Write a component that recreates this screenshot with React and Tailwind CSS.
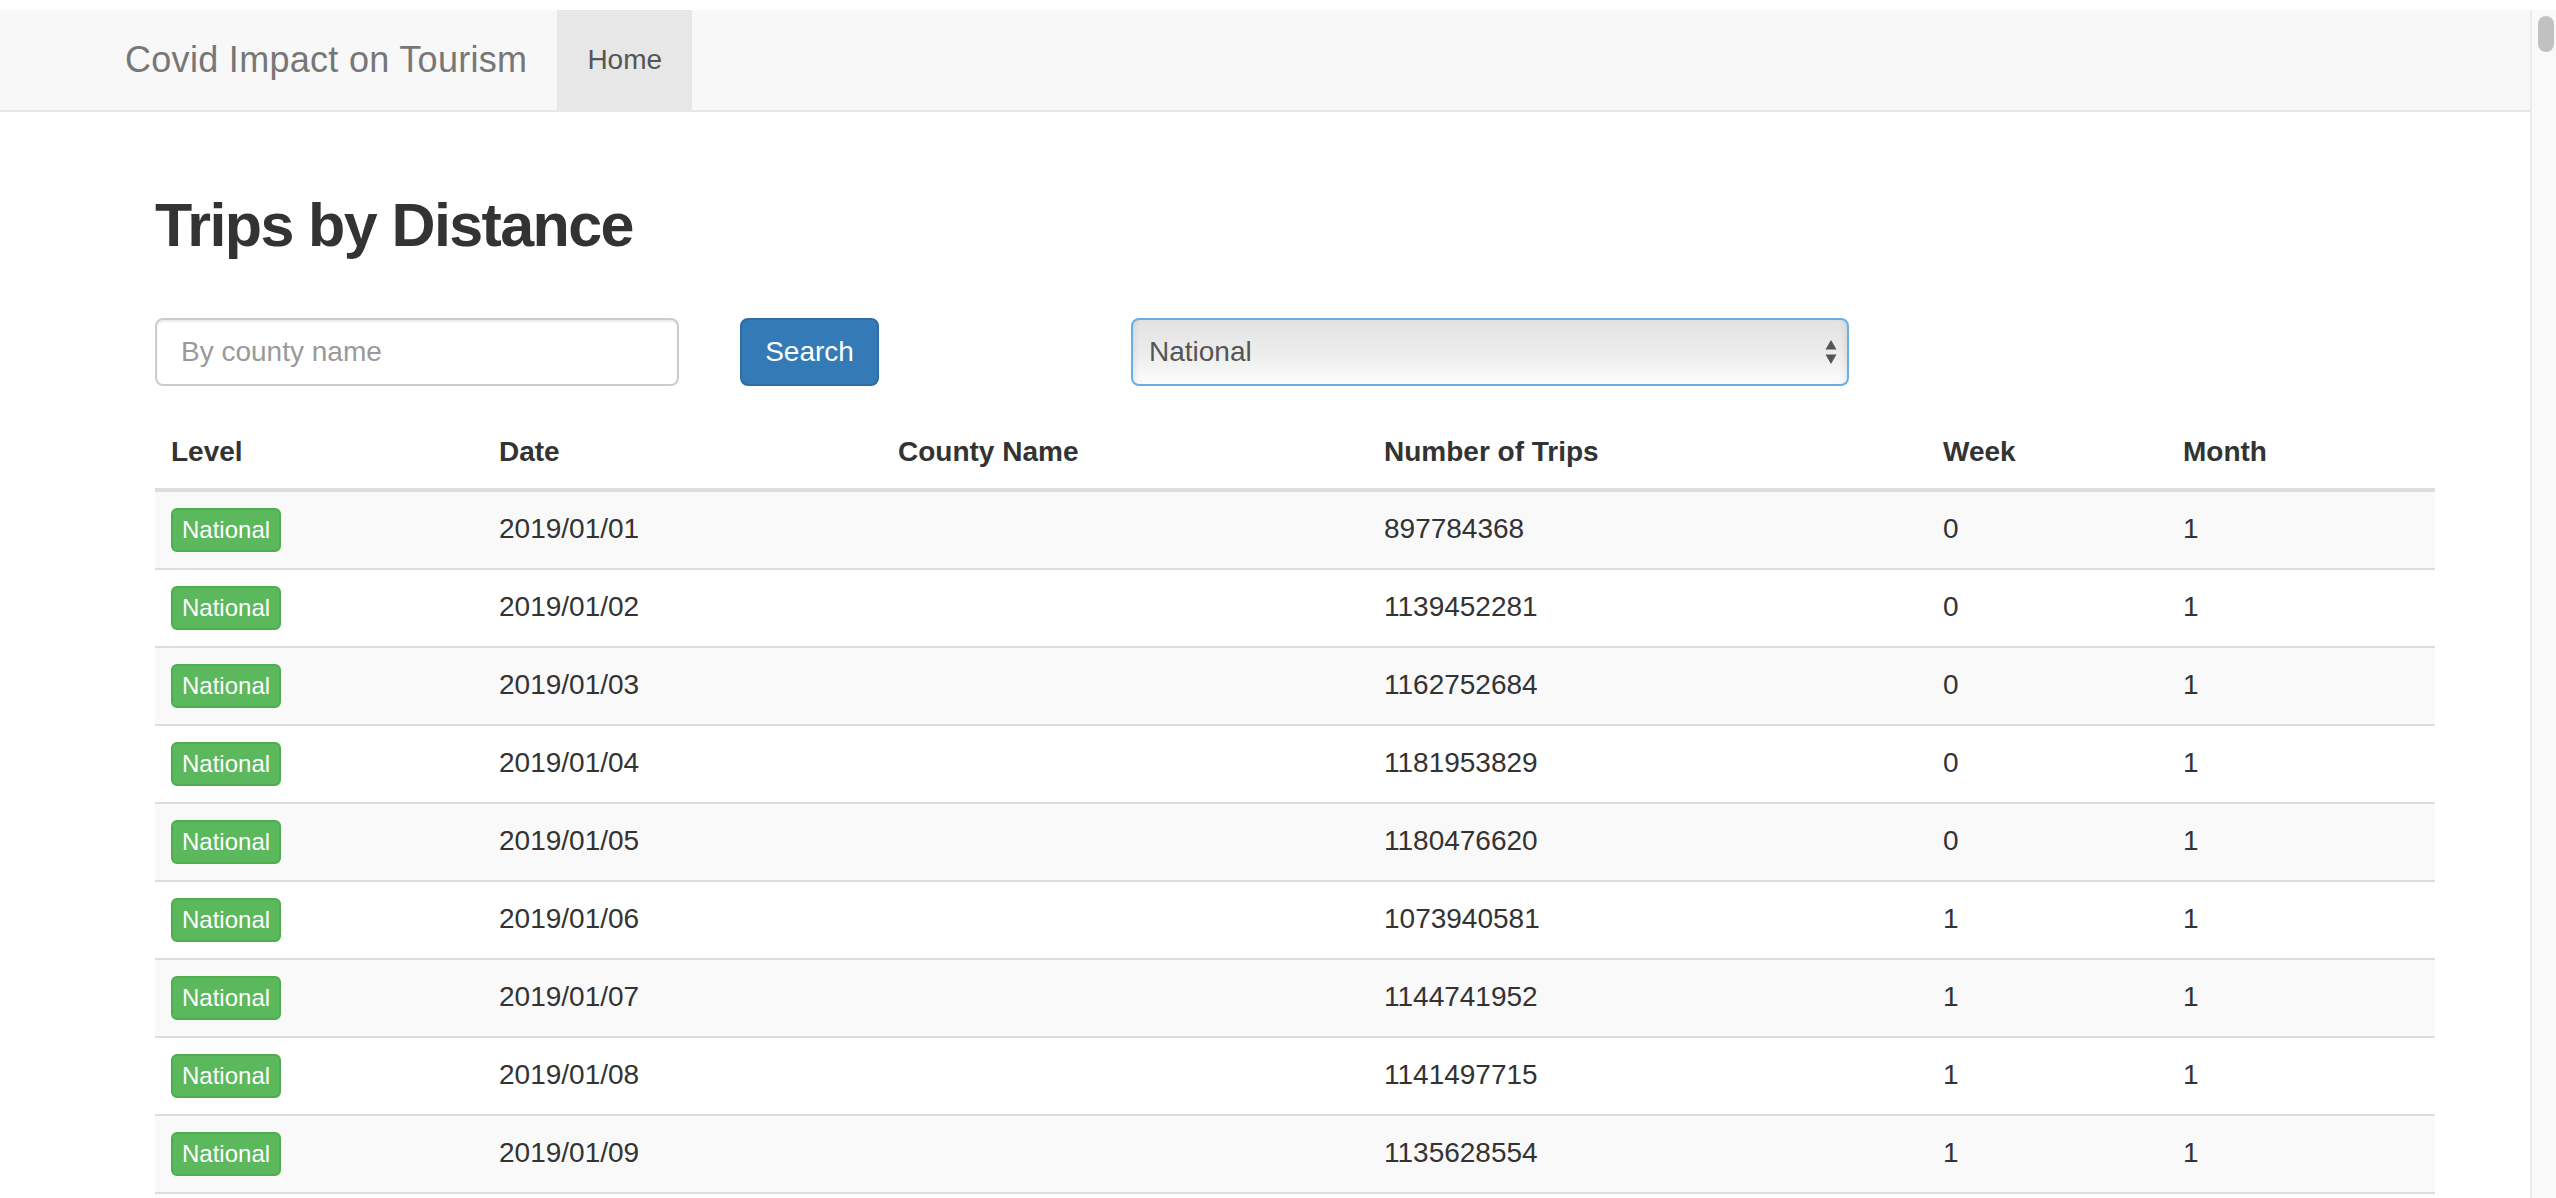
import React from "react";

const rows = [
  { date: "2019/01/01", trips: "897784368", week: "0", month: "1" },
  { date: "2019/01/02", trips: "1139452281", week: "0", month: "1" },
  { date: "2019/01/03", trips: "1162752684", week: "0", month: "1" },
  { date: "2019/01/04", trips: "1181953829", week: "0", month: "1" },
  { date: "2019/01/05", trips: "1180476620", week: "0", month: "1" },
  { date: "2019/01/06", trips: "1073940581", week: "1", month: "1" },
  { date: "2019/01/07", trips: "1144741952", week: "1", month: "1" },
  { date: "2019/01/08", trips: "1141497715", week: "1", month: "1" },
  { date: "2019/01/09", trips: "1135628554", week: "1", month: "1" },
];

const cols = "grid grid-cols-[328px_399px_486px_559px_240px_268px]";

const App = () => {
  return (
    <div className="h-[1198px] overflow-hidden bg-white font-['Liberation_Sans',Arial,sans-serif] text-[#333]">
      <div className="h-[10px]" />
      <div className="flex h-[1188px]">
        <div className="flex-1 min-w-0">
          {/* Navbar */}
          <nav className="h-[102px] bg-[#f8f8f8] border-b-2 border-[#e7e7e7] flex pl-[95px]">
            <a className="px-[30px] text-[36px] leading-[100px] tracking-[0.3px] text-[#777]">
              Covid Impact on Tourism
            </a>
            <a className="px-[30px] text-[28px] leading-[100px] text-[#555] bg-[#e7e7e7]">
              Home
            </a>
          </nav>

          <div className="pl-[155px]">
            <h1 className="mt-[80px] text-[61px] leading-[66px] font-bold tracking-[-1.6px] text-[#333]">
              Trips by Distance
            </h1>

            {/* Search form */}
            <div className="mt-[60px] flex h-[68px]">
              <input
                type="text"
                placeholder="By county name"
                className="w-[524px] h-[68px] border-2 border-[#ccc] rounded-[8px] px-[24px] text-[28px] text-[#555] placeholder:text-[#999] shadow-[inset_0_2px_2px_rgba(0,0,0,0.075)] outline-none"
              />
              <button className="ml-[61px] w-[139px] h-[68px] bg-[#337ab7] border-2 border-[#2e6da4] rounded-[8px] text-white text-[28px]">
                Search
              </button>
              <div className="ml-[252px] w-[718px] h-[68px] border-2 border-[#66afe9] rounded-[8px] bg-gradient-to-b from-[#e3e3e3] via-[#ececec] to-[#fdfdfd] shadow-[inset_6px_0_6px_-4px_rgba(0,0,0,0.08),inset_-6px_0_6px_-4px_rgba(0,0,0,0.08)] flex items-center justify-between pl-[16px] pr-[10px]">
                <span className="text-[28px] text-[#555]">National</span>
                <svg width="12" height="26" viewBox="0 0 12 26">
                  <path d="M6 1 L11.5 10.5 L0.5 10.5 Z" fill="#555" />
                  <path d="M6 25 L11.5 15.5 L0.5 15.5 Z" fill="#555" />
                </svg>
              </div>
            </div>

            {/* Table */}
            <div className="mt-[30px] w-[2280px]">
              <div className={`${cols} h-[76px] border-b-4 border-[#ddd] items-center text-[28px] font-bold`}>
                <div className="px-[16px]">Level</div>
                <div className="px-[16px]">Date</div>
                <div className="px-[16px]">County Name</div>
                <div className="px-[16px]">Number of Trips</div>
                <div className="px-[16px]">Week</div>
                <div className="px-[16px]">Month</div>
              </div>
              {rows.map((row, i) => (
                <div
                  key={row.date}
                  className={`${cols} h-[78px] border-b-2 border-[#ddd] items-center text-[28px] ${
                    i % 2 === 0 ? "bg-[#f9f9f9]" : "bg-white"
                  }`}
                >
                  <div className="px-[16px]">
                    <span className="inline-flex items-center h-[44px] px-[9px] bg-[#5cb85c] border-2 border-[#4cae4c] rounded-[6px] text-white text-[24px]">
                      National
                    </span>
                  </div>
                  <div className="px-[16px] pb-[3px]">{row.date}</div>
                  <div className="px-[16px] pb-[3px]"></div>
                  <div className="px-[16px] pb-[3px]">{row.trips}</div>
                  <div className="px-[16px] pb-[3px]">{row.week}</div>
                  <div className="px-[16px] pb-[3px]">{row.month}</div>
                </div>
              ))}
            </div>
          </div>
        </div>

        {/* Scrollbar */}
        <div className="w-[26px] border-l-2 border-[#ebebeb] bg-[#f9f9f9] pt-[6px] pl-[6px]">
          <div className="w-[16px] h-[36px] rounded-full bg-[#c1c1c1]" />
        </div>
      </div>
    </div>
  );
};

export default App;
